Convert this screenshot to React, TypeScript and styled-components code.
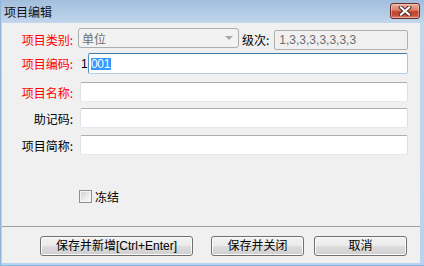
import styled, { createGlobalStyle } from "styled-components";

const GlobalStyle = createGlobalStyle`
  html, body {
    margin: 0;
    padding: 0;
  }
  body {
    font-family: "Liberation Sans", "Noto Sans CJK SC", sans-serif;
    font-size: 12px;
    color: #000;
  }
`;

const Window = styled.div`
  width: 424px;
  height: 266px;
  box-sizing: border-box;
  display: flex;
  flex-direction: column;
  background: linear-gradient(#a2bedd, #c2d6ec 23px, #bed5ee 60%, #b7d3ef);
  border-left: 1px solid #92b3d8;
  border-bottom: 1px solid #7fb9e2;
`;

const TitleBar = styled.div`
  height: 23px;
  flex: 0 0 23px;
  display: flex;
  align-items: flex-start;
  justify-content: space-between;
  padding: 0 4px 0 3px;
`;

const Title = styled.span`
  font-family: "Noto Sans CJK SC", sans-serif;
  font-size: 12px;
  line-height: 23px;
  color: #111;
`;

const CloseButton = styled.div`
  margin-top: 3px;
  width: 30px;
  height: 16px;
  box-sizing: border-box;
  border: 1px solid #6a2d27;
  border-radius: 3px;
  display: flex;
  align-items: center;
  justify-content: center;
  background: linear-gradient(#ebb0a1, #dc7f69 45%, #c7462f 52%, #c54c39 80%, #d98a76);
  box-shadow: inset 0 0 0 1px rgba(255, 220, 210, 0.45);
`;

const Content = styled.div`
  flex: 1;
  margin: 0 4px 2px 1px;
  background: #f0f0f0;
  display: flex;
  flex-direction: column;
`;

const Form = styled.div`
  flex: 1;
  padding: 5px 12px 0 0;
  display: flex;
  flex-direction: column;
`;

const Row = styled.div<{ $h: number; $mt: number }>`
  display: flex;
  align-items: center;
  height: ${(p) => p.$h}px;
  margin-top: ${(p) => p.$mt}px;
`;

const Label = styled.span<{ $required?: boolean }>`
  width: 76px;
  flex: 0 0 76px;
  box-sizing: border-box;
  padding-right: 5px;
  text-align: right;
  font-family: "Noto Sans CJK SC", sans-serif;
  color: ${(p) => (p.$required ? "#ff0000" : "#000")};
  white-space: nowrap;
`;

const Combo = styled.div`
  align-self: flex-start;
  width: 161px;
  height: 20px;
  box-sizing: border-box;
  border: 1px solid #adadad;
  border-radius: 3px;
  background: #f2f2f2;
  display: flex;
  align-items: center;
  padding-left: 3px;
  color: #6d6d6d;
  font-family: "Noto Sans CJK SC", sans-serif;
`;

const ComboText = styled.span`
  flex: 1;
`;

const ComboArrow = styled.span`
  width: 0;
  height: 0;
  margin-right: 5px;
  border-left: 4px solid transparent;
  border-right: 4px solid transparent;
  border-top: 4px solid #a8a8a8;
`;

const SideLabel = styled.span`
  margin-left: 3px;
  font-family: "Noto Sans CJK SC", sans-serif;
  white-space: nowrap;
`;

const ReadOnlyBox = styled.div`
  align-self: flex-end;
  flex: 1;
  margin-left: 5px;
  height: 20px;
  box-sizing: border-box;
  border: 1px solid #b0b0b0;
  border-radius: 2px;
  background: #f0f0f0;
  color: #6d6d6d;
  padding-left: 4px;
  line-height: 18px;
`;

const Prefix = styled.span`
  width: 10px;
  flex: 0 0 10px;
  box-sizing: border-box;
  padding-left: 3px;
  font-size: 12px;
  line-height: 12px;
`;

const TextBox = styled.div<{ $focused?: boolean; $ml?: number }>`
  flex: 1;
  height: ${(p) => (p.$focused ? 21 : 20)}px;
  margin-left: ${(p) => p.$ml ?? 0}px;
  box-sizing: border-box;
  border: 1px solid;
  border-radius: 2px;
  border-color: ${(p) =>
    p.$focused
      ? "#3d7bad #a4c9e3 #b5cfe7 #5593c3"
      : "#abadb3 #dbdfe6 #e3e9ef #e2e3ea"};
  background: #fff;
  display: flex;
  align-items: center;
  padding-left: 2px;
`;

const Selected = styled.span`
  background: #3399ff;
  color: #fff;
  font-size: 12px;
  line-height: 12px;
  height: 12px;
  padding: 0 1px 0 0;
  letter-spacing: -0.3px;
`;

const CheckRow = styled.label`
  display: flex;
  align-items: center;
  gap: 3px;
  margin-top: 35px;
  padding-left: 77px;
  height: 13px;
  font-family: "Noto Sans CJK SC", sans-serif;
`;

const CheckBox = styled.span`
  width: 13px;
  height: 13px;
  box-sizing: border-box;
  border: 1px solid #8e8f8f;
  background: linear-gradient(135deg, #cfcfcf, #f4f4f4 75%, #ffffff);
  box-shadow: inset 0 0 0 1px #f4f4f4;
`;

const Footer = styled.div`
  height: 37px;
  flex: 0 0 37px;
  box-sizing: border-box;
  border-top: 1px solid #a0a0a0;
  padding: 9px 0 0 38px;
  display: flex;
  align-items: flex-start;
`;

const Button = styled.button<{ $w: number; $mr?: number }>`
  width: ${(p) => p.$w}px;
  height: 20px;
  margin-right: ${(p) => p.$mr ?? 0}px;
  padding: 0;
  box-sizing: border-box;
  border: 1px solid #707070;
  border-radius: 3px;
  background: linear-gradient(#f2f2f2 0%, #ebebeb 50%, #dddddd 50%, #cfcfcf 100%);
  box-shadow: inset 0 0 0 1px #fbfbfb;
  font-family: "Liberation Sans", "Noto Sans CJK SC", sans-serif;
  font-size: 12px;
  line-height: 18px;
  color: #000;
  white-space: nowrap;
`;

export default function App() {
  return (
    <>
      <GlobalStyle />
      <Window>
        <TitleBar>
          <Title>项目编辑</Title>
          <CloseButton>
            <svg width="14" height="10" viewBox="0 0 14 10">
              <path d="M3 1.5 L11 8.5 M11 1.5 L3 8.5" stroke="#4a2a28" strokeWidth="4" strokeLinecap="square" />
              <path d="M3 1.5 L11 8.5 M11 1.5 L3 8.5" stroke="#ffffff" strokeWidth="2.2" strokeLinecap="square" />
            </svg>
          </CloseButton>
        </TitleBar>
        <Content>
          <Form>
            <Row $h={22} $mt={0}>
              <Label $required>项目类别:</Label>
              <Combo>
                <ComboText>单位</ComboText>
                <ComboArrow />
              </Combo>
              <SideLabel>级次:</SideLabel>
              <ReadOnlyBox>1,3,3,3,3,3,3,3</ReadOnlyBox>
            </Row>
            <Row $h={21} $mt={3}>
              <Label $required>项目编码:</Label>
              <Prefix>1</Prefix>
              <TextBox $focused>
                <Selected>001</Selected>
              </TextBox>
            </Row>
            <Row $h={20} $mt={8}>
              <Label $required>项目名称:</Label>
              <TextBox $ml={2} />
            </Row>
            <Row $h={20} $mt={6}>
              <Label>助记码:</Label>
              <TextBox $ml={2} />
            </Row>
            <Row $h={20} $mt={7}>
              <Label>项目简称:</Label>
              <TextBox $ml={2} />
            </Row>
            <CheckRow>
              <CheckBox />
              冻结
            </CheckRow>
          </Form>
          <Footer>
            <Button $w={153} $mr={18}>保存并新增[Ctrl+Enter]</Button>
            <Button $w={93} $mr={10}>保存并关闭</Button>
            <Button $w={93}>取消</Button>
          </Footer>
        </Content>
      </Window>
    </>
  );
}
